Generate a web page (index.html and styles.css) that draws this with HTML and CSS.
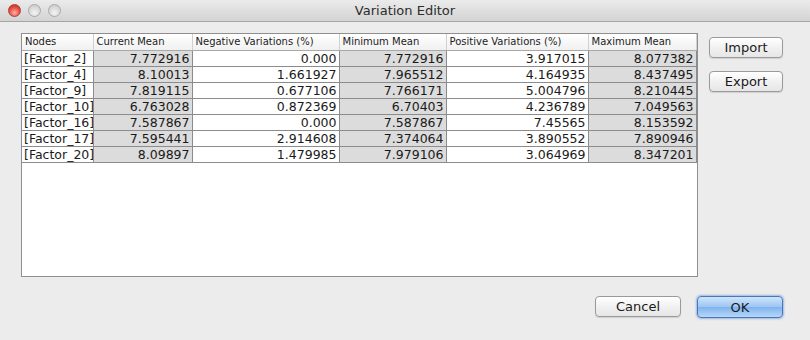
FILE: index.html
```html
<!DOCTYPE html>
<html lang="en">
<head>
  <meta charset="UTF-8">
  <title>Variation Editor</title>
  <link rel="stylesheet" href="styles.css">
</head>
<body>
  <div class="window">

    <!-- Title bar -->
    <div class="titlebar">
      <div class="lights">
        <span class="light close"></span>
        <span class="light"></span>
        <span class="light"></span>
      </div>
      <div class="title">Variation Editor</div>
    </div>

    <!-- Table and side buttons -->
    <div class="content">
      <div class="table-box">
        <table class="grid">
          <thead>
            <tr>
              <th class="c-node">Nodes</th>
              <th class="c-cur">Current Mean</th>
              <th class="c-neg">Negative Variations (%)</th>
              <th class="c-min">Minimum Mean</th>
              <th class="c-pos">Positive Variations (%)</th>
              <th class="c-max">Maximum Mean</th>
            </tr>
          </thead>
          <tbody>
            <tr><td>[Factor_2]</td><td class="shade">7.772916</td><td>0.000</td><td class="shade">7.772916</td><td>3.917015</td><td class="shade">8.077382</td></tr>
            <tr><td>[Factor_4]</td><td class="shade">8.10013</td><td>1.661927</td><td class="shade">7.965512</td><td>4.164935</td><td class="shade">8.437495</td></tr>
            <tr><td>[Factor_9]</td><td class="shade">7.819115</td><td>0.677106</td><td class="shade">7.766171</td><td>5.004796</td><td class="shade">8.210445</td></tr>
            <tr><td>[Factor_10]</td><td class="shade">6.763028</td><td>0.872369</td><td class="shade">6.70403</td><td>4.236789</td><td class="shade">7.049563</td></tr>
            <tr><td>[Factor_16]</td><td class="shade">7.587867</td><td>0.000</td><td class="shade">7.587867</td><td>7.45565</td><td class="shade">8.153592</td></tr>
            <tr><td>[Factor_17]</td><td class="shade">7.595441</td><td>2.914608</td><td class="shade">7.374064</td><td>3.890552</td><td class="shade">7.890946</td></tr>
            <tr><td>[Factor_20]</td><td class="shade">8.09897</td><td>1.479985</td><td class="shade">7.979106</td><td>3.064969</td><td class="shade">8.347201</td></tr>
          </tbody>
        </table>
      </div>
      <div class="side-buttons">
        <button class="btn">Import</button>
        <button class="btn">Export</button>
      </div>
    </div>

    <!-- Dialog buttons -->
    <div class="footer">
      <button class="btn btn-wide">Cancel</button>
      <button class="btn btn-wide btn-default">OK</button>
    </div>
  </div>
</body>
</html>
```

FILE: styles.css
```css
body {
  margin: 0;
  font-family: "Lucida Grande", "DejaVu Sans", sans-serif;
  background-color: #ececec;
}
.window {
  width: 810px;
  height: 340px;
  background-color: #ececec;
  overflow: hidden;
}
.titlebar {
  position: relative;
  height: 21px;
  border-bottom: 1px solid #a5a5a5;
  background: linear-gradient(#ebebeb, #d3d3d3);
}
.lights {
  display: flex;
  gap: 7px;
  padding: 4px 0 0 8px;
}
.light {
  width: 13px;
  height: 13px;
  border-radius: 50%;
  box-sizing: border-box;
  border: 1px solid #a9a9a9;
  background: radial-gradient(circle at 50% 70%, #f4f4f4, #c4c4c4);
}
.light.close {
  border-color: #b13a32;
  background: radial-gradient(circle at 50% 70%, #ffb0a4, #e2463b 60%, #b92c24);
}
.title {
  position: absolute;
  top: 3px;
  left: 0;
  right: 0;
  text-align: center;
  font-size: 13px;
  color: #2c2c2c;
}
.content {
  display: flex;
  gap: 11px;
  padding: 11px 0 0 21px;
}
.table-box {
  width: 675px;
  height: 242px;
  border: 1px solid #8f8f8f;
  background-color: #ffffff;
}
.grid {
  border-collapse: collapse;
  table-layout: fixed;
  width: 674px;
}
.grid th {
  box-sizing: border-box;
  height: 16px;
  padding: 0 0 0 3px;
  font-size: 10px;
  font-weight: normal;
  text-align: left;
  color: #1c1c1c;
  border-right: 1px solid #d0d0d0;
  border-bottom: 1px solid #a9a9a9;
  background: linear-gradient(#ffffff, #f0f0f0);
  white-space: nowrap;
  overflow: hidden;
}
.grid td {
  height: 15px;
  padding: 0 2px 0 2px;
  font-size: 12.5px;
  line-height: 15px;
  text-align: right;
  color: #1a1a1a;
  border: 1px solid #8c8c8c;
  white-space: nowrap;
  overflow: hidden;
}
.grid td:first-child {
  text-align: left;
  border-left: none;
}
.grid td.shade {
  background-color: #dcdcdc;
}
.c-node { width: 71px; }
.c-cur { width: 99px; }
.c-neg { width: 147px; }
.c-min { width: 107px; }
.c-pos { width: 142px; }
.c-max { width: 108px; }
.side-buttons {
  display: flex;
  flex-direction: column;
  gap: 13px;
  padding-top: 4px;
}
.btn {
  width: 74px;
  height: 21px;
  padding: 0;
  font-family: "Lucida Grande", "DejaVu Sans", sans-serif;
  font-size: 13px;
  color: #1a1a1a;
  border: 1px solid #9a9a9a;
  border-radius: 4px;
  background: linear-gradient(#ffffff, #f1f1f1 50%, #e6e6e6);
  box-shadow: 0 1px 1px rgba(0, 0, 0, 0.12);
}
.footer {
  display: flex;
  justify-content: flex-end;
  gap: 16px;
  padding: 19px 27px 0 0;
}
.btn-wide {
  width: 86px;
}
.btn-default {
  height: 22px;
  border-color: #4a77b8;
  background: linear-gradient(#cfe4fb, #9cc6f3 50%, #7fb3ee 51%, #b6d7f8);
  box-shadow: 0 0 2px 1px rgba(86, 140, 214, 0.55);
}
```
